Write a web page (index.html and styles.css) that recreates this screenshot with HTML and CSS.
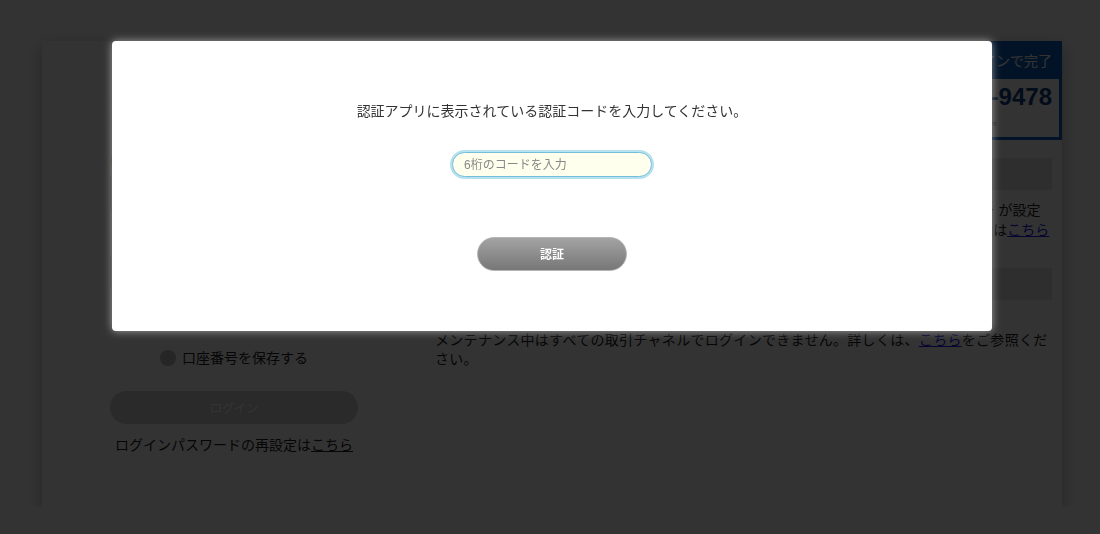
FILE: index.html
```html
<!DOCTYPE html>
<html lang="ja">
  <head>
    <meta charset="UTF-8" />
    <meta name="viewport" content="width=device-width, initial-scale=1.0" />
    <title>ログイン - 二段階認証</title>
    <link rel="stylesheet" href="styles.css">
  </head>
  <body>
    <div class="page">
      <div class="login-card">
        <!-- left column: login form -->
        <div class="col-left">
          <ul class="notes">
            <li>※口座番号を入力してください。</li>
            <li>※大文字・小文字を区別します。</li>
          </ul>
          <div class="fields">
            <div class="field">
              <div class="field-label">口座番号</div>
              <input class="field-input" type="text" />
            </div>
            <div class="field">
              <div class="field-label">ログインパスワード</div>
              <input class="field-input" type="password" />
            </div>
          </div>
          <label class="save-row">
            <span class="radio"></span>
            <span>口座番号を保存する</span>
          </label>
          <button class="login-btn" type="button">ログイン</button>
          <p class="reset">ログインパスワードの再設定は<a href="#">こちら</a></p>
        </div>

        <!-- right column: info -->
        <div class="col-right">
          <div class="promo">
            <div class="promo-head">スマホアプリなら、生体認証でかんたんログインで完了</div>
            <div class="promo-body">
              <div class="promo-tel">0120-00-9478</div>
              <div class="promo-note">受付時間：平日 9:00〜17:00 お気軽にお問い合わせください。</div>
            </div>
          </div>
          <div class="grey-box"></div>
          <p class="info">ログインの二段階認証には、事前に認証アプリのダウンロードと初期登録による認証キー が設定<br>されている必要があります。認証アプリの設定方法および対応機種に関する詳細なご案内は<a href="#">こちら</a></p>
          <div class="grey-box"></div>
          <p class="maint">メンテナンス中はすべての取引チャネルでログインできません。詳しくは、<a href="#">こちら</a>をご参照ください。</p>
        </div>
      </div>
    </div>

    <!-- two-factor dialog -->
    <div class="overlay"></div>
    <div class="modal">
      <p class="modal-text">認証アプリに表示されている認証コードを入力してください。</p>
      <input class="code-input" type="text" placeholder="6桁のコードを入力" />
      <button class="auth-btn" type="button">認証</button>
    </div>
  </body>
</html>
```

FILE: styles.css
```css
body {
  margin: 0;
  padding: 0;
  font-family: "Liberation Sans", "Noto Sans CJK JP", sans-serif;
  font-size: 14px;
  color: #333;
  background: #fff;
  overflow: hidden;
}

.page {
  padding: 41px 0 0 42px;
}

/* Login card */
.login-card {
  width: 1020px;
  height: 466px;
  box-sizing: border-box;
  padding: 0 10px 0 68px;
  background: #fff;
  box-shadow: 0 5px 16px rgba(0, 0, 0, 0.28);
  display: grid;
  grid-template-columns: 248px 1fr;
  column-gap: 77px;
}

.col-left {
  display: flex;
  flex-direction: column;
}

.notes {
  list-style: none;
  margin: 45px 0 0;
  padding: 0;
  font-size: 13px;
  line-height: 23px;
  white-space: nowrap;
  color: #222;
}

.fields {
  margin-top: 18px;
  display: flex;
  flex-direction: column;
  gap: 18px;
}

.field-label {
  line-height: 20px;
  margin-bottom: 5px;
}

.field-input {
  display: block;
  width: 100%;
  height: 36px;
  margin: 0;
  box-sizing: border-box;
  border: 1px solid #ccc;
  border-radius: 4px;
}

.save-row {
  margin-top: 58px;
  display: flex;
  align-items: center;
  justify-content: center;
  gap: 6px;
  line-height: 20px;
  color: #222;
}

.radio {
  width: 16px;
  height: 16px;
  border-radius: 50%;
  background: #bebebe;
}

.login-btn {
  margin-top: 23px;
  height: 33px;
  border: none;
  border-radius: 17px;
  background: #d0d0d0;
  color: #fff;
  font-family: inherit;
  font-size: 12px;
}

.reset {
  margin: 11px 0 0;
  line-height: 20px;
  text-align: center;
  color: #222;
}

.reset a {
  color: #222;
}

/* Right column */
.col-right {
  display: flex;
  flex-direction: column;
}

.promo {
  margin-right: -10px;
  background: #0a5fc0;
  padding: 0 3px 3px;
}

.promo-head {
  height: 38px;
  line-height: 40px;
  text-align: right;
  padding-right: 7px;
  color: #fff;
  white-space: nowrap;
}

.promo-body {
  background: #fff;
  height: 58px;
  text-align: right;
  padding-right: 7px;
  white-space: nowrap;
}

.promo-tel {
  padding-top: 4px;
  font-size: 24px;
  font-weight: bold;
  line-height: 28px;
  color: #0a3f82;
}

.promo-note {
  font-size: 12px;
  line-height: 20px;
  padding-right: 48px;
  color: #555;
}

.grey-box {
  height: 32px;
  background: #e6e6e6;
  margin-top: 18px;
}

.info {
  margin: 10px 0 0;
  line-height: 20px;
  white-space: nowrap;
  color: #222;
}

.info + .grey-box {
  margin-top: 28px;
}

.maint {
  margin: 31px 0 0;
  line-height: 19px;
  letter-spacing: 0.3px;
  color: #222;
}

.info a,
.maint a {
  color: #1a1aee;
}

/* Dialog */
.overlay {
  position: fixed;
  top: 0;
  left: 0;
  width: 100%;
  height: 100%;
  background: rgba(0, 0, 0, 0.8);
}

.modal {
  position: fixed;
  top: 41px;
  left: 112px;
  width: 880px;
  height: 290px;
  box-sizing: border-box;
  padding-top: 60px;
  background: #fff;
  border-radius: 4px;
  box-shadow: 0 0 9px rgba(255, 255, 255, 0.55);
  display: flex;
  flex-direction: column;
  align-items: center;
}

.modal-text {
  margin: 0;
  line-height: 20px;
  color: #333;
}

.code-input {
  margin-top: 31px;
  width: 200px;
  height: 25px;
  box-sizing: border-box;
  padding: 0 11px;
  border: 1px solid #74bddb;
  border-radius: 13px;
  background: #ffffee;
  box-shadow: 0 0 0 2px #b5e2ee;
  font-family: inherit;
  font-size: 12px;
  outline: none;
}

.code-input::placeholder {
  color: #888;
}

.auth-btn {
  margin-top: 60px;
  width: 150px;
  height: 34px;
  padding: 0 0 2px;
  border: 1px solid #b5b5b5;
  border-radius: 17px;
  background: linear-gradient(180deg, #a3a3a3 0%, #777 100%);
  color: #fff;
  font-family: inherit;
  font-size: 12px;
  font-weight: bold;
}
```
